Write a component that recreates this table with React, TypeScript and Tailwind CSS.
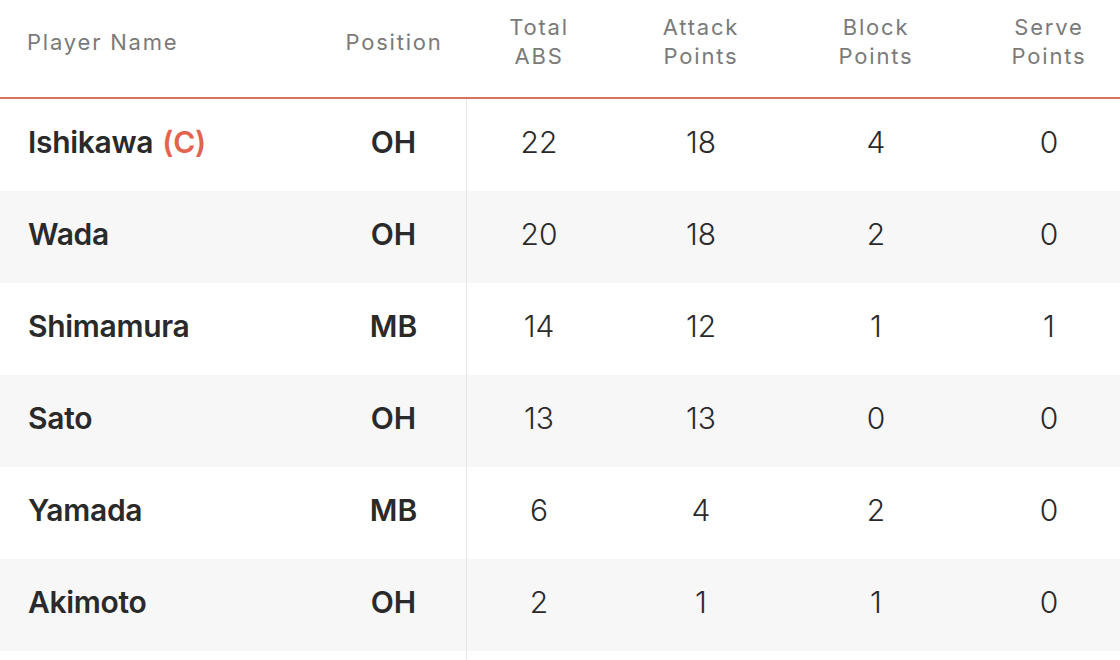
import React from "react";

type Player = {
  name: string;
  captain?: boolean;
  pos: string;
  total: number;
  attack: number;
  block: number;
  serve: number;
};

const players: Player[] = [
  { name: "Ishikawa", captain: true, pos: "OH", total: 22, attack: 18, block: 4, serve: 0 },
  { name: "Wada", pos: "OH", total: 20, attack: 18, block: 2, serve: 0 },
  { name: "Shimamura", pos: "MB", total: 14, attack: 12, block: 1, serve: 1 },
  { name: "Sato", pos: "OH", total: 13, attack: 13, block: 0, serve: 0 },
  { name: "Yamada", pos: "MB", total: 6, attack: 4, block: 2, serve: 0 },
  { name: "Akimoto", pos: "OH", total: 2, attack: 1, block: 1, serve: 0 },
];

const cols = "grid grid-cols-[321px_146px_144px_180px_170px_176px]";
const cell = "flex items-center justify-center pb-[5px]";

const App = () => {
  return (
    <div className="w-[1120px] h-[660px] overflow-hidden bg-white font-['Inter',sans-serif] text-[#2a2a2a]">
      <div className="w-[1137px]">
        {/* header */}
        <div className={`${cols} h-[99px] pb-[13px] items-center text-[22px] leading-[29px] tracking-[1.8px] text-[#7a7a7a] border-b-2 border-[#d8705f]`}>
          <div className="pl-[27px]">Player Name</div>
          <div className="text-center">Position</div>
          <div className="text-center">Total<br />ABS</div>
          <div className="text-center">Attack<br />Points</div>
          <div className="text-center">Block<br />Points</div>
          <div className="text-center">Serve<br />Points</div>
        </div>

        {/* body */}
        {players.map((p, i) => (
          <div
            key={p.name}
            className={`${cols} h-[92px] text-[30px] ${i % 2 === 1 ? "bg-[#f7f7f7]" : "bg-white"}`}
          >
            <div className="flex items-center pb-[5px] pl-[28px] font-semibold tracking-[-0.3px]">
              {p.name}
              {p.captain && <span className="text-[#e4634f] ml-[9px]">(C)</span>}
            </div>
            <div className={`${cell} font-semibold border-r border-[#e6e6e6]`}>{p.pos}</div>
            <div className={`${cell} font-light`}>{p.total}</div>
            <div className={`${cell} font-light`}>{p.attack}</div>
            <div className={`${cell} font-light`}>{p.block}</div>
            <div className={`${cell} font-light`}>{p.serve}</div>
          </div>
        ))}
        <div className={`${cols} h-[20px]`}>
          <div />
          <div className="border-r border-[#e6e6e6]" />
        </div>
      </div>
    </div>
  );
};

export default App;
